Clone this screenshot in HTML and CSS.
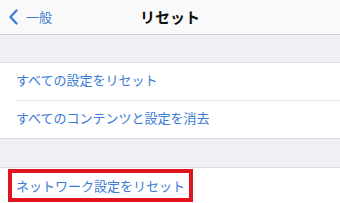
FILE: index.html
```html
<!DOCTYPE html>
<html lang="ja">
<head>
  <meta charset="UTF-8">
  <meta name="viewport" content="width=device-width, initial-scale=1.0">
  <title>リセット</title>
  <link rel="stylesheet" href="styles.css">
</head>
<body>
  <div class="navbar">
    <a class="back" href="#">
      <svg class="chevron" width="9" height="16" viewBox="0 0 9 16">
        <path d="M7.5 1.5 L1.5 8 L7.5 14.5" fill="none" stroke="#3a7bd5" stroke-width="2.3" stroke-linecap="round" stroke-linejoin="round"/>
      </svg>
      <span>一般</span>
    </a>
    <div class="title">リセット</div>
  </div>

  <div class="gap"></div>

  <div class="group">
    <div class="row">すべての設定をリセット</div>
    <div class="row">すべてのコンテンツと設定を消去</div>
  </div>

  <div class="gap gap-wide"></div>

  <div class="group">
    <div class="row marked"><span class="highlight">ネットワーク設定をリセット</span></div>
  </div>
</body>
</html>
```

FILE: styles.css
```css
body {
  margin: 0;
  font-family: "Noto Sans CJK JP", "Noto Sans", sans-serif;
  background: #efeff4;
  overflow: hidden;
}

.navbar {
  position: relative;
  height: 34px;
  background: #f9f9f9;
  border-bottom: 1px solid #cfcfd3;
  display: flex;
  align-items: center;
  justify-content: center;
}

.back {
  position: absolute;
  left: 9px;
  top: 0;
  height: 33px;
  display: flex;
  align-items: center;
  gap: 8px;
  color: #3a7bd5;
  text-decoration: none;
  font-size: 13px;
}

.title {
  font-size: 15px;
  font-weight: bold;
  color: #111;
  margin-bottom: 2px;
}

.gap {
  height: 27px;
}

.gap-wide {
  height: 28px;
}

.group {
  background: #fff;
  border-top: 1px solid #dcdce0;
  border-bottom: 1px solid #dcdce0;
}

.row {
  height: 36px;
  line-height: 34px;
  padding-bottom: 1px;
  margin-left: 16px;
  font-size: 13px;
  color: #3a7bd5;
  border-bottom: 1px solid #e4e4e7;
}

.row:last-child {
  border-bottom: none;
}

.row.marked {
  margin-left: 8px;
  height: 40px;
  padding: 1px 0 0;
  line-height: 25px;
}

.highlight {
  display: inline-block;
  border: 4px solid #e0141e;
  padding: 0 4px;
  line-height: 25px;
}
```
